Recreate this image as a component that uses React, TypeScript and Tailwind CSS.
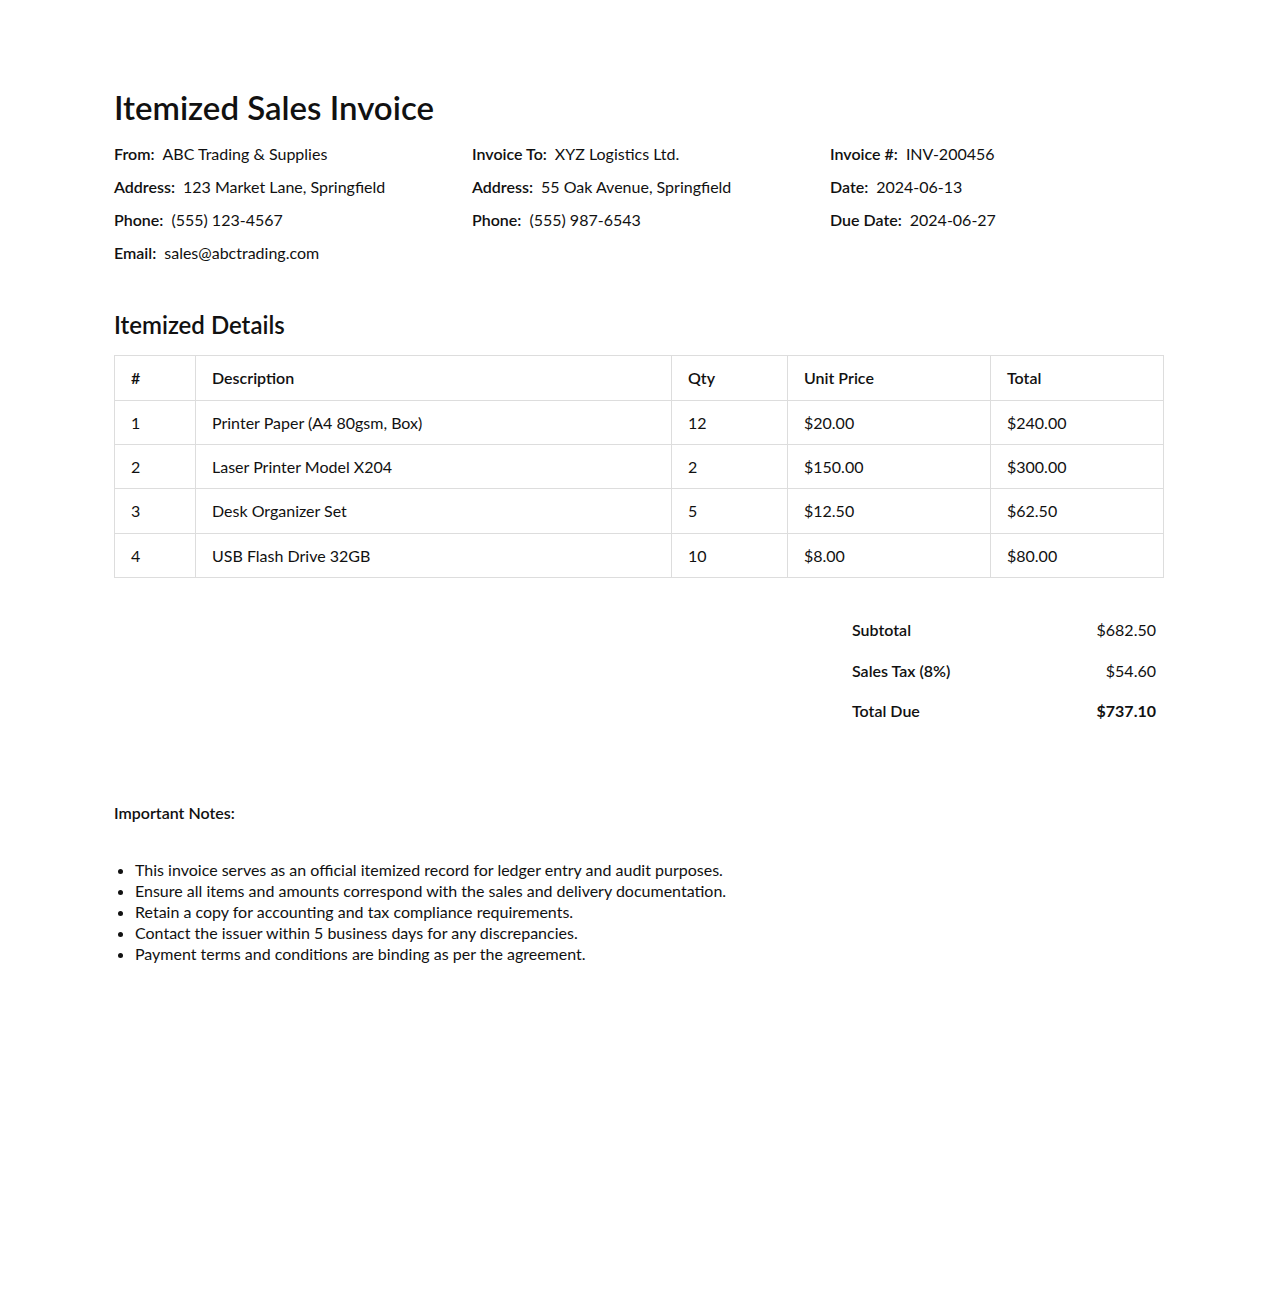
const items = [
  { id: 1, desc: 'Printer Paper (A4 80gsm, Box)', qty: 12, unit: '$20.00', total: '$240.00' },
  { id: 2, desc: 'Laser Printer Model X204', qty: 2, unit: '$150.00', total: '$300.00' },
  { id: 3, desc: 'Desk Organizer Set', qty: 5, unit: '$12.50', total: '$62.50' },
  { id: 4, desc: 'USB Flash Drive 32GB', qty: 10, unit: '$8.00', total: '$80.00' },
];

const notes = [
  'This invoice serves as an official itemized record for ledger entry and audit purposes.',
  'Ensure all items and amounts correspond with the sales and delivery documentation.',
  'Retain a copy for accounting and tax compliance requirements.',
  'Contact the issuer within 5 business days for any discrepancies.',
  'Payment terms and conditions are binding as per the agreement.',
];

function Field({ label, value }: { label: string; value: string }) {
  return (
    <div className="leading-[21px]">
      <span className="font-semibold mr-[8px]">{label}</span>
      {value}
    </div>
  );
}

export default function App() {
  return (
    <div className="min-h-[1300px] bg-white text-[#111] text-[16px] font-['Segoe_UI','Lato',sans-serif]">
      <div className="max-w-[1050px] mx-auto pt-[88px]">
        <h1 className="text-[33px] font-semibold leading-[38px]">Itemized Sales Invoice</h1>

        <div className="grid grid-cols-3 gap-x-6 mt-[17px]">
          <div className="flex flex-col gap-3">
            <Field label="From:" value="ABC Trading & Supplies" />
            <Field label="Address:" value="123 Market Lane, Springfield" />
            <Field label="Phone:" value="(555) 123-4567" />
            <Field label="Email:" value="sales@abctrading.com" />
          </div>
          <div className="flex flex-col gap-3">
            <Field label="Invoice To:" value="XYZ Logistics Ltd." />
            <Field label="Address:" value="55 Oak Avenue, Springfield" />
            <Field label="Phone:" value="(555) 987-6543" />
          </div>
          <div className="flex flex-col gap-3">
            <Field label="Invoice #:" value="INV-200456" />
            <Field label="Date:" value="2024-06-13" />
            <Field label="Due Date:" value="2024-06-27" />
          </div>
        </div>

        <h2 className="text-[24px] font-semibold leading-[29px] mt-[47px]">Itemized Details</h2>

        <table className="w-full mt-[16px] border-collapse border border-[#ddd]">
          <thead>
            <tr className="h-[45px]">
              <th className="w-[81px] border border-[#ddd] px-4 text-left font-semibold">#</th>
              <th className="w-[476px] border border-[#ddd] px-4 text-left font-semibold">Description</th>
              <th className="w-[116px] border border-[#ddd] px-4 text-left font-semibold">Qty</th>
              <th className="w-[203px] border border-[#ddd] px-4 text-left font-semibold">Unit Price</th>
              <th className="border border-[#ddd] px-4 text-left font-semibold">Total</th>
            </tr>
          </thead>
          <tbody>
            {items.map((it) => (
              <tr key={it.id} className={it.id === 3 ? 'h-[45px]' : 'h-[44px]'}>
                <td className="border border-[#ddd] px-4">{it.id}</td>
                <td className="border border-[#ddd] px-4">{it.desc}</td>
                <td className="border border-[#ddd] px-4">{it.qty}</td>
                <td className="border border-[#ddd] px-4">{it.unit}</td>
                <td className="border border-[#ddd] px-4">{it.total}</td>
              </tr>
            ))}
          </tbody>
        </table>

        <div className="flex justify-end mt-[32px]">
          <table className="w-[320px]">
            <tbody>
              <tr className="h-[40px]">
                <td className="px-2 font-semibold">Subtotal</td>
                <td className="px-2 text-right">$682.50</td>
              </tr>
              <tr className="h-[41px]">
                <td className="px-2 font-semibold">Sales Tax (8%)</td>
                <td className="px-2 text-right">$54.60</td>
              </tr>
              <tr className="h-[40px]">
                <td className="px-2 font-semibold">Total Due</td>
                <td className="px-2 text-right font-bold">$737.10</td>
              </tr>
            </tbody>
          </table>
        </div>

        <div className="mt-[71px] font-semibold leading-[21px]">Important Notes:</div>
        <ul className="list-disc pl-[21px] mt-[36px] leading-[21px]">
          {notes.map((n) => (
            <li key={n}>{n}</li>
          ))}
        </ul>
      </div>
    </div>
  );
}
